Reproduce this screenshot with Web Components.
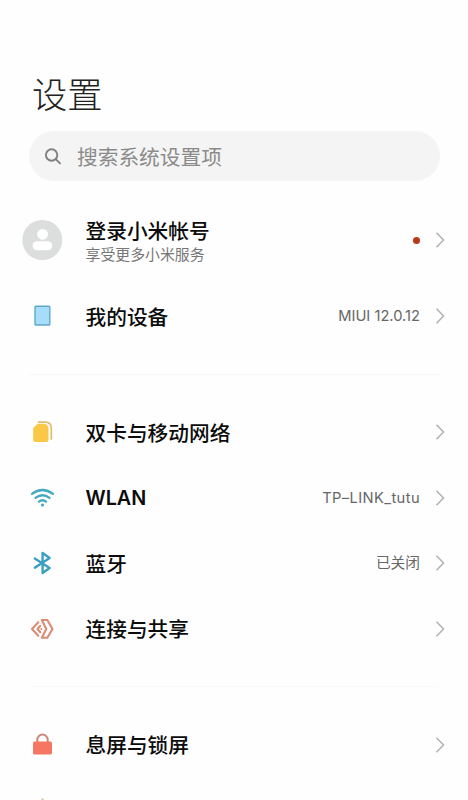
<!DOCTYPE html>
<html lang="zh-CN"><head><meta charset="utf-8"><title>设置</title>
<style>html,body{margin:0;height:100%;overflow:hidden;background:#fefefe}</style></head>
<body>
<settings-page>
  <settings-search slot="search">搜索系统设置项</settings-search>
  <settings-group>
    <settings-row class="account" icon="avatar" label="登录小米帐号" note="享受更多小米服务" dot></settings-row>
    <settings-row icon="device" label="我的设备">MIUI 12.0.12</settings-row>
  </settings-group>
  <settings-group class="faint">
    <settings-row icon="sim" label="双卡与移动网络"></settings-row>
    <settings-row class="latin" icon="wifi" label="WLAN">TP–LINK_tutu</settings-row>
    <settings-row icon="bluetooth" label="蓝牙">已关闭</settings-row>
    <settings-row icon="share" label="连接与共享"></settings-row>
  </settings-group>
  <settings-group class="last">
    <settings-row icon="lock" label="息屏与锁屏"></settings-row>
    <settings-row icon="sun" label=""></settings-row>
  </settings-group>
</settings-page>
<script>
const icons = {
  avatar: '<circle cx="21.3" cy="21" r="20" fill="#dcdddd"/><circle cx="21.6" cy="15.3" r="5.4" fill="#fff"/><rect x="11.6" y="22.2" width="19.6" height="9" rx="4.2" fill="#fff"/>',
  device: '<rect x="14" y="11.2" width="14.8" height="18.8" rx=".8" fill="#a5ddfb" stroke="#5fa8cb" stroke-width="1.4"/>',
  sim: '<path d="M17.5 11.1h6.5q6.3 0 6.3 6.3V28" fill="none" stroke="#dfbc6c" stroke-width="1.7" stroke-linecap="round"/><path d="M16.8 12.8h6q4.6.6 4.7 5v11.2q0 2-2 2h-11q-2.3 0-2.3-2V17z" fill="#fbc747"/>',
  wifi: '<g fill="none" stroke="#43a9bf" stroke-width="2.3" stroke-linecap="round"><path d="M11 16.9Q21.5 9 32 16.9"/><path d="M14.5 20.9Q21.5 15.5 28.5 20.9"/><path d="M18 24.6Q21.5 22 25 24.6"/></g><circle cx="21.5" cy="28" r="1.6" fill="#43a9bf"/>',
  bluetooth: '<path d="M13.8 16.5 28.6 26 21.6 31V11L28.6 16 13.8 25.7" fill="none" stroke="#3a9fc2" stroke-width="2.4" stroke-linejoin="round" stroke-linecap="round"/>',
  share: '<g fill="none" stroke="#dc8b74" stroke-width="2.1" stroke-linejoin="round" stroke-linecap="round"><path d="M20.8 12h5.5L31.5 21l-5.2 8.7h-5.5L25.3 21z"/><path d="M17.3 14.3 11 21l6.3 6.7M19.3 17.8 16.5 21l2.8 3.2"/></g><circle cx="20.3" cy="21" r="1" fill="#dc8b74"/>',
  lock: '<path d="M16.3 19v-3.2a5.2 5.2 0 0 1 10.4 0V19" fill="none" stroke="#c98578" stroke-width="2"/><rect x="12" y="17.6" width="19" height="13" rx="1.7" fill="#f37763"/>',
  sun: '<path d="M21.5 9 24 12h4v16H15V12h4z" fill="#dcc79e"/>'
};
const define = (name, html) => customElements.define(name, class extends HTMLElement {
  constructor() {
    super();
    this.attachShadow({mode: 'open'}).innerHTML = typeof html === 'function' ? html(this) : html;
  }
});
define('settings-page', `<style>
:host{display:flex;flex-direction:column;height:800px;overflow:hidden;background:#fefefe;font-family:"Noto Sans CJK SC",sans-serif}
h1{flex:none;box-sizing:border-box;margin:0;padding:65.5px 0 0 32px;height:131px;font-size:35.3px;line-height:54px;font-weight:300;color:#222}
main{flex:none;padding-top:16.25px}
</style><h1>设置</h1><slot name="search"></slot><main><slot></slot></main>`);
define('settings-search', `<style>
:host{display:flex;align-items:center;flex:none;margin:0 28px 0 29px;height:50px;border-radius:25px;background:#f4f4f4;color:#8b8b8b;font-size:20.7px;line-height:30px}
svg{width:20px;height:20px;margin:0 14px 0 14px}
</style><svg viewBox="0 0 20 20" fill="none" stroke="#808080" stroke-width="1.9" stroke-linecap="round"><circle cx="8.6" cy="9" r="5.7"/><path d="m13 13.4 4 4"/></svg><span><slot></slot></span>`);
define('settings-group', `<style>
:host{display:block}
hr{height:1px;border:0;margin:24.75px 29px;background:#f6f6f6}
:host(.faint) hr{background:#fafafa}
:host(.last) hr{display:none}
</style><slot></slot><hr>`);
define('icon-glyph', el => `<style>:host{display:block;flex:none;width:42px;height:42px}svg{display:block}</style><svg width="42" height="42" viewBox="0 0 42 42">${icons[el.getAttribute('name')]}</svg>`);
define('settings-row', el => `<style>
:host{display:flex;align-items:center;box-sizing:border-box;height:65.5px;padding:0 22px 0 21px}
:host(.account){height:86px}
.text{margin-left:22.5px;flex:1;font-size:20.7px;line-height:26px;font-weight:500;color:#0c0c0c;white-space:nowrap}
.label{margin-bottom:1px}
.note{font-size:14.9px;line-height:20px;font-weight:400;color:#777}
:host(.latin) .label{margin:1px 0 0;font-family:Inter,sans-serif;font-size:19.8px;font-weight:600}
.value{font-family:Inter,"Noto Sans CJK SC",sans-serif;font-size:14.7px;line-height:22px;color:#666;white-space:nowrap}
:host(.latin) .value{letter-spacing:.4px}
.dot{width:7px;height:7px;border-radius:50%;background:#b8391b}
.chev{margin-left:13px;width:13px;height:18px}
</style><icon-glyph name="${el.getAttribute('icon')}"></icon-glyph>
<div class="text"><div class="label">${el.getAttribute('label')}</div>${el.hasAttribute('note') ? `<div class="note">${el.getAttribute('note')}</div>` : ''}</div>
${el.hasAttribute('dot') ? '<span class="dot"></span>' : ''}<span class="value"><slot></slot></span>
<svg class="chev" viewBox="0 0 13 18" fill="none" stroke="#b4b4b4" stroke-width="1.6"><path d="m3.5 1.7 7 7.3-7 7.3"/></svg>`);
</script></body></html>
